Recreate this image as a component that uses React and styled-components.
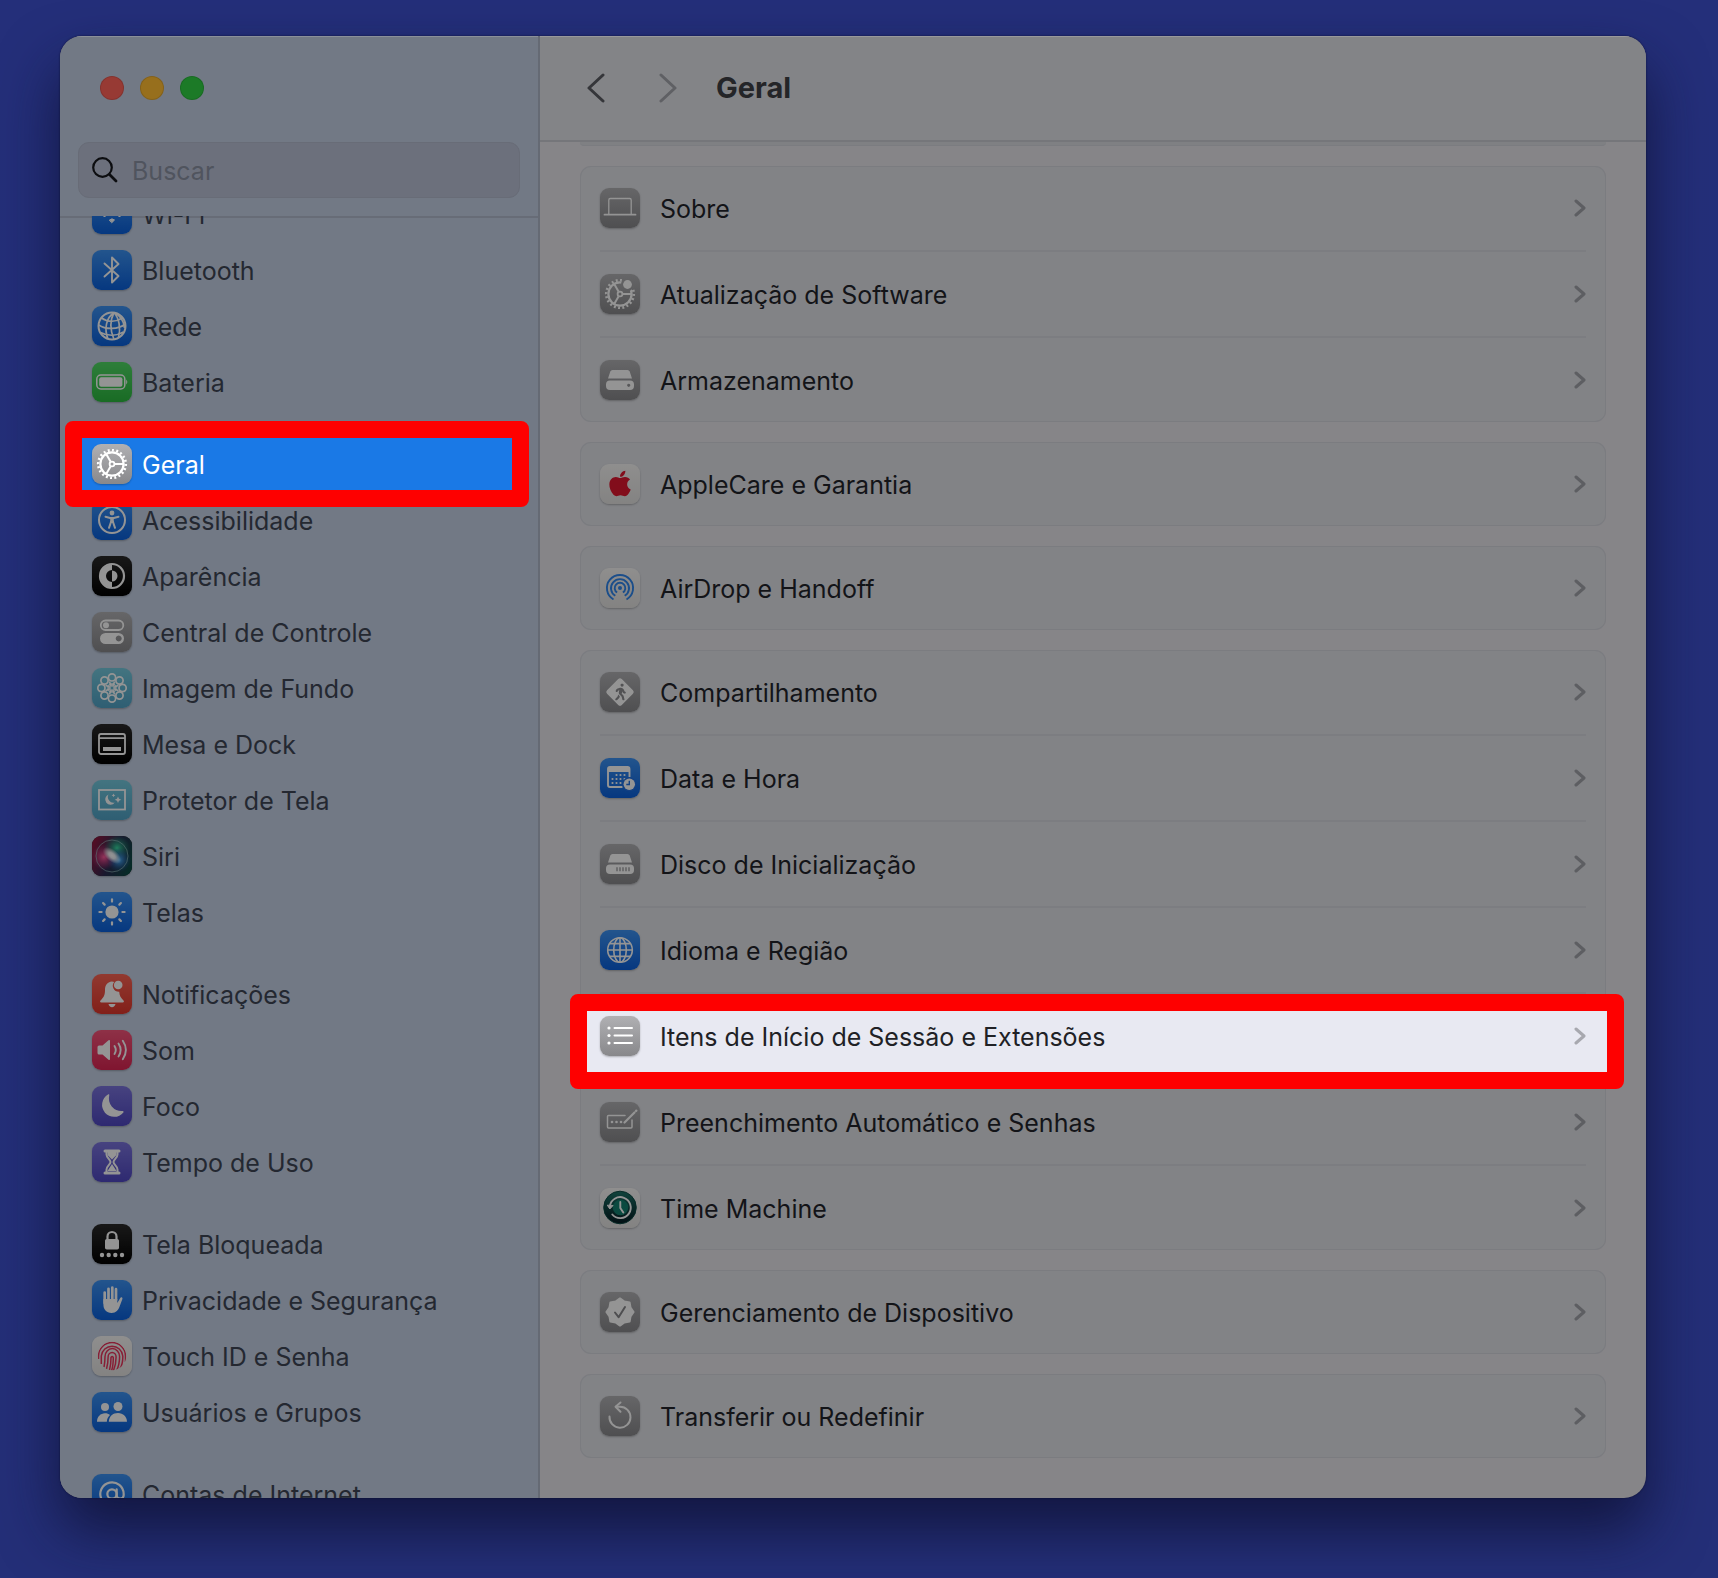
import React from "react";
import styled, { createGlobalStyle, css } from "styled-components";
import { FaApple, FaWalking } from "react-icons/fa";
import { AtSign } from "lucide-react";

const GlobalStyle = createGlobalStyle`
  *, *::before, *::after { box-sizing: border-box; }
  body { margin: 0; background: #242f79; font-family: Inter, "Liberation Sans", sans-serif; }
  button, input { font: inherit; color: inherit; }
`;

const Desktop = styled.div`
  display: flex;
  height: 100vh;
  padding: 36px 72px 80px 60px;
  overflow: hidden;
  background: linear-gradient(#242f7a, #242f78);
`;

const Window = styled.div`
  display: flex;
  flex: 1;
  min-width: 0;
  border-radius: 22px;
  overflow: hidden;
  background: #868588;
  box-shadow: 0 0 2px rgba(8, 10, 40, 0.8), 0 32px 60px rgba(14, 16, 50, 0.8);
`;

const Sidebar = styled.aside`
  display: flex;
  flex-direction: column;
  flex: 0 0 480px;
  min-width: 0;
  background: #727985;
  border-right: 2px solid #656a74;
  box-shadow: inset 0 1px 0 #8b9099;
`;

const SidebarTop = styled.div`
  display: flex;
  flex-direction: column;
  gap: 42px;
  padding: 40px 18px 18px;
`;

const Lights = styled.div`
  display: flex;
  gap: 16px;
  padding-left: 22px;
`;

const Light = styled.button`
  width: 24px;
  height: 24px;
  padding: 0;
  border: 1px solid rgba(0, 0, 0, 0.12);
  border-radius: 50%;
  background: ${(p) => p.$color};
`;

const SearchBox = styled.label`
  display: flex;
  align-items: center;
  gap: 14px;
  height: 56px;
  padding: 0 13px;
  border: 1px solid #686c77;
  border-radius: 11px;
  background: #6c707c;
  color: #0c0d10;
`;

const SearchInput = styled.input`
  flex: 1;
  min-width: 0;
  padding: 2px 0 0;
  border: 0;
  outline: 0;
  background: transparent;
  font-size: 25px;
  &::placeholder { color: #50545e; opacity: 1; }
`;

const SidebarScroll = styled.nav`
  flex: 1;
  min-height: 0;
  overflow: hidden;
  box-shadow: inset 0 2px 0 #676c77;
`;

const SidebarList = styled.div`
  display: flex;
  flex-direction: column;
  gap: 26px;
  margin: -30px 22px 0;
`;

const SidebarGroup = styled.div`
  display: flex;
  flex-direction: column;
`;

const Spotlight = styled.span`
  position: absolute;
  border: 17px solid #fe0000;
  border-radius: 8px;
  pointer-events: none;
`;

const SidebarSpotlight = styled(Spotlight)`
  inset: -15px -13px -15px -17px;
`;

const PanelSpotlight = styled(Spotlight)`
  inset: 0 -18px -11px -10px;
  background: #e8e9f2;
`;

const SidebarItem = styled.button`
  position: relative;
  display: flex;
  align-items: center;
  gap: 10px;
  height: 56px;
  padding: 0 10px;
  border: 0;
  background: transparent;
  color: #242831;
  font-size: 25px;
  line-height: 32px;
  text-align: left;
  white-space: nowrap;
  ${(p) => p.$active && css`
    z-index: 1;
    background: #1a79e6;
    color: #fff;
  `}
`;

const SidebarLabel = styled.span`
  padding-top: 2px;
`;

const tones = {
  blue: ["#3c92f3", "#0a60dc"],
  green: ["#4fd964", "#2bb93f"],
  grey: ["#b0b0b3", "#88888b"],
  black: ["#2a2a2a", "#000000"],
  sky: ["#74c9dd", "#50a2c6"],
  red: ["#fb6353", "#e0362b"],
  pink: ["#f5547a", "#dc2452"],
  purple: ["#7a73dc", "#4f47c2"],
  white: ["#f6f5f4", "#e2e1e0"],
};

const Tile = styled.span`
  position: relative;
  display: flex;
  flex: none;
  width: 40px;
  height: 40px;
  border-radius: 9px;
  overflow: hidden;
  color: #fff;
  background: linear-gradient(${(p) => tones[p.$tone][0]}, ${(p) => tones[p.$tone][1]});
  box-shadow: 0 1px 2px rgba(0, 0, 0, 0.25);
  filter: ${(p) => (p.$lit ? "none" : "brightness(0.58)")};
`;

const Main = styled.main`
  display: flex;
  flex-direction: column;
  flex: 1;
  min-width: 0;
`;

const Toolbar = styled.header`
  display: flex;
  align-items: center;
  gap: 32px;
  height: 106px;
  padding: 0 40px;
  background: #838487;
  border-bottom: 2px solid #75767a;
  box-shadow: inset 0 1px 0 #99999b;
`;

const NavButtons = styled.div`
  display: flex;
  gap: 40px;
`;

const NavButton = styled.button`
  display: flex;
  align-items: center;
  justify-content: center;
  width: 32px;
  height: 40px;
  padding: 0;
  border: 0;
  background: transparent;
  color: ${(p) => (p.disabled ? "#5f6064" : "#35363a")};
`;

const Title = styled.h1`
  margin: 0;
  color: #242528;
  font-size: 29px;
  line-height: 36px;
  font-weight: 700;
`;

const PanelScroll = styled.div`
  display: flex;
  flex-direction: column;
  gap: 20px;
  flex: 1;
  min-height: 0;
  padding: 0 40px 40px;
`;

const Card = styled.section`
  display: flex;
  flex-direction: column;
  border-radius: 11px;
  background: #828386;
  box-shadow: inset 0 0 0 1px #7b7c80;
`;

const CardTail = styled.div`
  flex: none;
  height: 4px;
  border-bottom: 1px solid #7b7c80;
  border-radius: 0 0 11px 11px;
  background: #7f8083;
`;

const Divider = styled.hr`
  align-self: stretch;
  height: 2px;
  margin: 0 20px;
  border: 0;
  background: #7c7d81;
`;

const PanelItem = styled.button`
  position: relative;
  display: flex;
  align-items: center;
  gap: 20px;
  height: 84px;
  padding: 0 20px;
  border: 0;
  background: transparent;
  color: ${(p) => (p.$lit ? "#202125" : "#131418")};
  font-size: 25px;
  line-height: 32px;
  text-align: left;
  z-index: ${(p) => (p.$lit ? 1 : 0)};
`;

const PanelLabel = styled.span`
  position: relative;
  flex: 1;
  min-width: 0;
  padding-top: 2px;
  white-space: nowrap;
`;

const ChevronSlot = styled.span`
  position: relative;
  display: flex;
  color: ${(p) => (p.$lit ? "#a7a8af" : "#5d5e62")};
`;

const polar = (r, deg) => {
  const a = (deg * Math.PI) / 180;
  return [20 + r * Math.cos(a), 20 + r * Math.sin(a)];
};

const line = (r1, r2, deg) => {
  const [x1, y1] = polar(r1, deg);
  const [x2, y2] = polar(r2, deg);
  return <line key={deg} x1={x1} y1={y1} x2={x2} y2={y2} />;
};

const Gear = () => (
  <g fill="none" stroke="currentColor" strokeWidth="2">
    <circle cx="20" cy="20" r="11.6" strokeWidth="2.2" />
    <circle cx="20" cy="20" r="13.8" strokeWidth="2.6" pathLength="40" strokeDasharray="0.9 1.1" />
    <circle cx="20" cy="20" r="2.4" strokeWidth="1.8" />
    {[0, 120, 240].map((d) => line(3, 11, d))}
  </g>
);

const sealPoints = Array.from({ length: 16 }, (_, i) => polar(i % 2 ? 11.4 : 13.6, i * 22.5).join(",")).join(" ");

const glyphs = {
  wifi: (
    <g fill="none" stroke="currentColor" strokeWidth="3" strokeLinecap="round">
      <path d="M8 17a17 17 0 0 1 24 0M12.500 21.500a10.500 10.500 0 0 1 15 0" />
      <path d="M17.500 26a3.600 3.600 0 0 1 5 0L20 28.500z" fill="currentColor" strokeWidth="1" />
    </g>
  ),
  bluetooth: <path d="M12.500 13.500 26.500 26 20 32.500V7.500L26.500 14 12.500 26.500" fill="none" stroke="currentColor" strokeWidth="1.900" strokeLinejoin="round" strokeLinecap="round" />,
  network: (
    <g fill="none" stroke="currentColor" strokeWidth="1.700">
      <circle cx="20" cy="20" r="13.500" strokeWidth="2" />
      <path d="M22 6.500C14 12 12 23 16 33M22 6.500C18 14 18 24 22 33.500M22 6.500C27 12 29 22 26.500 31.500M22 6.500C29 10 32 15 32.500 22" />
      <path d="M9.500 12C16 16.500 24 16 30.500 12M6.800 19C14 24 26 23.500 33.500 18M8.500 26.500C16 30.500 25 30 31.500 26" />
    </g>
  ),
  battery: (
    <g>
      <rect x="4.800" y="13" width="28" height="14" rx="4" fill="none" stroke="currentColor" strokeWidth="1.500" />
      <rect x="7.200" y="15.200" width="23.200" height="9.600" rx="2" fill="currentColor" />
      <path d="M34.200 17.500q2.200 2.500 0 5z" fill="currentColor" />
    </g>
  ),
  gear: <Gear />,
  access: (
    <g stroke="currentColor" fill="none" strokeWidth="2" strokeLinecap="round">
      <circle cx="20" cy="20" r="13" />
      <circle cx="20" cy="13" r="2.400" fill="currentColor" stroke="none" />
      <path d="M13.500 16.800 18 18h4l4.500-1.200M17 27.800 19 22h2l2 5.800" />
      <path d="M18.200 17.500h3.600V23h-3.600z" fill="currentColor" stroke="none" />
    </g>
  ),
  appearance: (
    <g>
      <circle cx="20" cy="20" r="12" fill="none" stroke="currentColor" strokeWidth="2.200" />
      <path d="M20 8.500a11.500 11.500 0 0 0 0 23v-5.500a6 6 0 0 1 0-12z" fill="currentColor" />
      <path d="M20 14.500a5.500 5.500 0 0 1 0 11z" fill="currentColor" />
    </g>
  ),
  control: (
    <g>
      <rect x="8.800" y="8.500" width="22.500" height="9.500" rx="4.750" fill="none" stroke="currentColor" strokeWidth="1.800" />
      <circle cx="14" cy="13.200" r="3" fill="currentColor" />
      <path fillRule="evenodd" d="M13.500 21h13a5.500 5.500 0 0 1 0 11h-13a5.500 5.500 0 0 1 0-11zm13.200 2.500a3 3 0 1 0 0.010 0z" fill="currentColor" />
    </g>
  ),
  flower: (
    <g fill="none" stroke="currentColor" strokeWidth="1.700">
      {Array.from({ length: 8 }, (_, i) => {
        const [x, y] = polar(10.6, i * 45);
        return <circle key={i} cx={x} cy={y} r="3.600" />;
      })}
      {Array.from({ length: 8 }, (_, i) => line(1.5, 7, i * 45 + 22.5))}
      <circle cx="20" cy="20" r="4" strokeWidth="1.300" />
    </g>
  ),
  dock: (
    <g>
      <rect x="7" y="10" width="26" height="20" rx="2" fill="none" stroke="currentColor" strokeWidth="1.800" />
      <path d="M7 14.200h26" stroke="currentColor" strokeWidth="1.800" />
      <rect x="11" y="23" width="18" height="4" fill="currentColor" />
    </g>
  ),
  saver: (
    <g>
      <rect x="7" y="10" width="26" height="19.500" fill="none" stroke="currentColor" strokeWidth="1.800" />
      <path d="M16.500 14.500a5.300 5.300 0 1 0 6.300 8 5.600 5.600 0 0 1-6.300-8z" fill="currentColor" />
      <path d="m26 16.500 1 2.300 2.300 1-2.300 1-1 2.300-1-2.300-2.300-1 2.300-1zM21.500 13.500l.6 1.300 1.300.6-1.300.6-.6 1.300-.6-1.300-1.300-.6 1.300-.6z" fill="currentColor" />
    </g>
  ),
  siri: (
    <g>
      <defs>
        <linearGradient id="siriBase" x1="0" y1="0.300" x2="1" y2="0.700">
          <stop offset="0" stopColor="#8c1840" />
          <stop offset="0.500" stopColor="#2a2a50" />
          <stop offset="1" stopColor="#0b4a44" />
        </linearGradient>
        <radialGradient id="siriPink"><stop offset="0" stopColor="#ff5a9c" /><stop offset="1" stopColor="#c02a78" stopOpacity="0" /></radialGradient>
        <radialGradient id="siriTeal"><stop offset="0" stopColor="#38d8a0" /><stop offset="1" stopColor="#1c9a76" stopOpacity="0" /></radialGradient>
        <radialGradient id="siriBlue"><stop offset="0" stopColor="#4ab4ff" /><stop offset="1" stopColor="#2450b0" stopOpacity="0" /></radialGradient>
        <radialGradient id="siriCore"><stop offset="0" stopColor="#ffffff" /><stop offset="0.350" stopColor="#ffffff" stopOpacity="0.900" /><stop offset="1" stopColor="#ffffff" stopOpacity="0" /></radialGradient>
      </defs>
      <rect width="40" height="40" fill="url(#siriBase)" />
      <circle cx="12" cy="21" r="13" fill="url(#siriPink)" />
      <circle cx="25" cy="12" r="13" fill="url(#siriTeal)" />
      <circle cx="27" cy="24" r="12" fill="url(#siriBlue)" />
      <ellipse cx="20" cy="19.500" rx="11" ry="6" transform="rotate(40 20 19.500)" fill="url(#siriCore)" />
      <circle cx="20" cy="20" r="16" fill="none" stroke="#9fc8c8" strokeOpacity="0.600" strokeWidth="1" />
    </g>
  ),
  sun: (
    <g stroke="currentColor" strokeWidth="2.200" strokeLinecap="round">
      <circle cx="20" cy="20" r="6.600" fill="currentColor" stroke="none" />
      {Array.from({ length: 8 }, (_, i) => line(10.4, 12.6, i * 45))}
    </g>
  ),
  bell: (
    <g fill="currentColor">
      <path d="M20 7.500c-5 .5-7 4-7 8.500 0 5.500-1.500 7.500-4.500 10.500-.8 1-.4 2 .8 2h21.400c1.200 0 1.600-1 .8-2-2.600-2.800-4-4.500-4.300-8.700a6 6 0 0 1-5-9.800z" />
      <path d="M16.500 30h7c-.3 2-1.800 3.200-3.500 3.200S16.800 32 16.500 30z" />
      <circle cx="26.200" cy="11" r="4.300" />
    </g>
  ),
  sound: (
    <g>
      <path d="M5.500 17q0-1.500 1.500-1.500h3.500l6-5.200q1.500-1 1.500.8v17.800q0 1.800-1.500.8l-6-5.200H7q-1.500 0-1.500-1.500z" fill="currentColor" />
      <path d="M22.500 16q2.600 4 0 8M26.500 13.500q4.300 6.500 0 13M30.800 10.800q6.200 9.200 0 18.400" fill="none" stroke="currentColor" strokeWidth="1.900" strokeLinecap="round" />
    </g>
  ),
  moon: <path d="M16 8.500c.8-.4 1.600.2 1.200 1.100A12.500 12.500 0 0 0 30 25c1.200-.3 1.900.4 1.400 1.400A12 12 0 1 1 16 8.500z" fill="currentColor" />,
  hourglass: (
    <g>
      <path d="M13 9h14M13 31h14" stroke="currentColor" strokeWidth="3" strokeLinecap="round" />
      <path d="M14.500 9v3.500c0 3.500 4 5 4 7.500s-4 4-4 7.500V31h11v-3.500c0-3.500-4-5-4-7.500s4-4 4-7.500V9" fill="none" stroke="currentColor" strokeWidth="2" />
      <path d="M15.500 10h9v3L20 17.500 15.500 13zM20 22l4.500 7h-9z" fill="currentColor" />
    </g>
  ),
  lock: (
    <g fill="currentColor">
      <path d="M15.500 16v-3.500a4.500 4.500 0 0 1 9 0V16" fill="none" stroke="currentColor" strokeWidth="2.200" />
      <rect x="13" y="15" width="14" height="10.500" rx="1.800" />
      {[10, 16.7, 23.3, 30].map((x) => <circle key={x} cx={x} cy="31" r="2.200" />)}
    </g>
  ),
  hand: (
    <g fill="currentColor" stroke="currentColor" strokeLinecap="round">
      <path d="M12.700 12.500V23M16.500 8.800V20M20.300 7.500V20M24 9.200V20" strokeWidth="2.700" />
      <path d="M11.400 19h13.900v4l2.800-4.800c.8-1.500 2.800-.9 2.300.8L27.600 26.500c-1.200 3.600-3.500 6.400-8 6.400-5.300 0-8.200-3.600-8.200-8.500z" stroke="none" />
    </g>
  ),
  finger: (
    <g fill="none" stroke="#e8345c" strokeWidth="1.500">
      <clipPath id="fingerClip"><circle cx="20" cy="20" r="14.200" /></clipPath>
      <g clipPath="url(#fingerClip)">
        <path d="M6.500 23v-3a13.500 13.500 0 0 1 27 0v6M9.300 28V20a10.800 10.800 0 0 1 21.500 0q.2 8-3 13M12 31q1-5 1-10.500a7 7.600 0 0 1 14.600 0q0 8-3 14M14.500 33q1.600-6 1.600-12a4 4.500 0 0 1 8 0q0 8-2.800 14M17.500 34q1.500-5 1.500-12.500a1.200 1.500 0 0 1 2.300 0q0 8-1.700 13" />
      </g>
    </g>
  ),
  users: (
    <g fill="currentColor">
      <circle cx="13" cy="15" r="4" />
      <path d="M5 29.700c0-5 3.500-8.500 8-8.500 2 0 3.700.6 5 1.800-2 1.800-3 4-3.200 6.700z" />
      <circle cx="26" cy="14.500" r="4.500" />
      <path d="M16.800 29.700c.3-5.200 4-8.600 9.200-8.600s8.800 3.600 9 8.600z" />
    </g>
  ),
  at: <AtSign x="6" y="6" width="28" height="28" strokeWidth={1.9} />,
  laptop: (
    <g fill="none" stroke="currentColor" strokeWidth="1.300">
      <path d="M8.800 26V12q0-1.500 1.500-1.500h19.400q1.500 0 1.500 1.500v14" />
      <path d="M4.500 26.700h31" strokeWidth="1.800" strokeLinecap="round" />
    </g>
  ),
  update: (
    <g>
      <clipPath id="updateClip"><path clipRule="evenodd" d="M0 0h40v40H0zM27.500 4a6.500 6.500 0 1 0 .010 0z" /></clipPath>
      <g clipPath="url(#updateClip)"><Gear /></g>
      <circle cx="27.500" cy="10.500" r="4.400" fill="currentColor" />
    </g>
  ),
  drive: (
    <g fill="currentColor">
      <path d="M12.500 10h15q1.600 0 2.200 1.500L32 18.500H8l2.300-7Q10.900 10 12.500 10z" />
      <path fillRule="evenodd" d="M10 20.500h20a4 4 0 0 1 4 4V26a4 4 0 0 1-4 4H10a4 4 0 0 1-4-4v-1.500a4 4 0 0 1 4-4zm18.700 3.200a1.600 1.600 0 1 0 .010 0z" />
    </g>
  ),
  disk: (
    <g fill="currentColor">
      <path d="M12.500 10h15q1.600 0 2.200 1.500L32 18.500H8l2.300-7Q10.900 10 12.500 10z" />
      <rect x="6" y="20.500" width="28" height="9.500" rx="4" />
      <path d="M17 23.200v4M20 23.200v4M23 23.200v4M26 23.200v4M29 23.200v4" stroke="#8f8f93" strokeWidth="1.200" />
    </g>
  ),
  apple: <FaApple x="5.500" y="5" size={29} color="#e0162f" />,
  airdrop: (
    <g fill="none" stroke="#2f86ee" strokeWidth="1.900">
      <circle cx="20" cy="20" r="2" fill="#2f86ee" stroke="none" />
      <path d="M17.100 24.500a5.300 5.300 0 1 1 5.800 0M15.300 27.800a9 9 0 1 1 9.400 0M13.500 31.500a13.100 13.100 0 1 1 13 0" />
    </g>
  ),
  sharing: (
    <g>
      <rect x="9.600" y="9.600" width="20.800" height="20.800" rx="2.500" transform="rotate(45 20 20)" fill="currentColor" />
      <FaWalking x="12" y="11.500" size={17} color="#8d8d91" />
    </g>
  ),
  calendar: (
    <g>
      <path d="M22.500 29H10q-2 0-2-2V11q0-2 2-2h17.500q2 0 2 2v8" fill="none" stroke="currentColor" strokeWidth="1.900" />
      <path d="M8 9.500h21.500v4.500H8z" fill="currentColor" />
      {[[16.5, 17], [20.5, 17], [24.5, 17], [12.5, 21], [16.5, 21], [20.5, 21], [24.5, 21], [12.5, 25], [16.5, 25], [20.5, 25]].map(([x, y]) => (
        <circle key={`${x}-${y}`} cx={x} cy={y} r="1.100" fill="currentColor" />
      ))}
      <circle cx="29.300" cy="26.300" r="7" fill="#2270e2" />
      <circle cx="29.300" cy="26.300" r="5.700" fill="currentColor" />
      <path d="M29.300 22.800v3.700h-3" fill="none" stroke="#2270e2" strokeWidth="1.400" />
    </g>
  ),
  globe: (
    <g fill="none" stroke="currentColor" strokeWidth="1.600">
      <circle cx="20" cy="20" r="12.300" />
      <ellipse cx="20" cy="20" rx="6.300" ry="12.300" />
      <path d="M20 7.700v24.600M7.700 20h24.600M9.800 13.600h20.400M9.800 26.400h20.400" />
    </g>
  ),
  list: (
    <g stroke="currentColor" strokeWidth="2" strokeLinecap="round">
      <path d="M14.500 12H32M14.500 19.500H32M14.500 27H32" />
      {[12, 19.5, 27].map((y) => <circle key={y} cx="9" cy={y} r="1.600" fill="currentColor" stroke="none" />)}
    </g>
  ),
  autofill: (
    <g fill="none" stroke="currentColor" strokeWidth="1.500" strokeLinecap="round">
      <path d="M25 13.500H8.500q-1 0-1 1V25q0 1 1 1H31q1 0 1-1v-7" />
      <path d="m24.500 20.500 10-10" strokeWidth="2.200" />
      <path d="m36 9 .3-.3" strokeWidth="2.400" />
      {[12, 16.5, 21].map((x) => <circle key={x} cx={x} cy="20" r="1.300" fill="currentColor" stroke="none" />)}
    </g>
  ),
  timemachine: (
    <g>
      <defs>
        <linearGradient id="tmFace" x1="0" y1="0" x2="0" y2="1"><stop offset="0" stopColor="#1c7468" /><stop offset="1" stopColor="#041a20" /></linearGradient>
      </defs>
      <circle cx="20" cy="19.500" r="16.300" fill="url(#tmFace)" stroke="#0d4a44" strokeWidth="1" />
      <g fill="none" stroke="currentColor" strokeWidth="1.900" strokeLinecap="round">
        <circle cx="20.500" cy="19.500" r="7.800" fill="#13806f" stroke="none" />
        <path d="M9.800 18.500a10.500 10.500 0 1 1 2.500 8M20.300 14v6l3 4.500" />
        <path d="m7.500 17.500 2.300 3.500 3-3.200z" fill="currentColor" strokeWidth="1" />
      </g>
    </g>
  ),
  seal: (
    <g>
      <polygon points={sealPoints} fill="currentColor" stroke="currentColor" strokeWidth="2" strokeLinejoin="round" />
      <path d="m15 20.500 3.600 4.700L25 15" fill="none" stroke="#86868a" strokeWidth="2" strokeLinecap="round" strokeLinejoin="round" />
    </g>
  ),
  reset: (
    <g fill="none" stroke="currentColor" strokeWidth="2" strokeLinecap="round" strokeLinejoin="round">
      <path d="M9.500 20.500A10.500 10.500 0 1 0 20 10.700h-4" />
      <path d="M20.500 6.500 15.500 10.700l5 5" />
    </g>
  ),
};

function AppIcon({ name, tone, lit }) {
  return (
    <Tile $tone={tone} $lit={lit} aria-hidden="true">
      <svg width="40" height="40" viewBox="0 0 40 40">{glyphs[name]}</svg>
    </Tile>
  );
}

function Chevron({ left, width, height, stroke }) {
  const d = left
    ? `M${width - 2} 2 2 ${height / 2}l${width - 4} ${height / 2 - 2}`
    : `M2 2l${width - 4} ${height / 2 - 2}L2 ${height - 2}`;
  return (
    <svg width={width} height={height} viewBox={`0 0 ${width} ${height}`} aria-hidden="true">
      <path d={d} fill="none" stroke="currentColor" strokeWidth={stroke} strokeLinecap="round" strokeLinejoin="round" />
    </svg>
  );
}

const sidebarGroups = [
  [
    ["Wi-Fi", "wifi", "blue"],
    ["Bluetooth", "bluetooth", "blue"],
    ["Rede", "network", "blue"],
    ["Bateria", "battery", "green"],
  ],
  [
    ["Geral", "gear", "grey"],
    ["Acessibilidade", "access", "blue"],
    ["Aparência", "appearance", "black"],
    ["Central de Controle", "control", "grey"],
    ["Imagem de Fundo", "flower", "sky"],
    ["Mesa e Dock", "dock", "black"],
    ["Protetor de Tela", "saver", "sky"],
    ["Siri", "siri", "black"],
    ["Telas", "sun", "blue"],
  ],
  [
    ["Notificações", "bell", "red"],
    ["Som", "sound", "pink"],
    ["Foco", "moon", "purple"],
    ["Tempo de Uso", "hourglass", "purple"],
  ],
  [
    ["Tela Bloqueada", "lock", "black"],
    ["Privacidade e Segurança", "hand", "blue"],
    ["Touch ID e Senha", "finger", "white"],
    ["Usuários e Grupos", "users", "blue"],
  ],
  [["Contas de Internet", "at", "blue"]],
];

const panelGroups = [
  [
    ["Sobre", "laptop", "grey"],
    ["Atualização de Software", "update", "grey"],
    ["Armazenamento", "drive", "grey"],
  ],
  [["AppleCare e Garantia", "apple", "white"]],
  [["AirDrop e Handoff", "airdrop", "white"]],
  [
    ["Compartilhamento", "sharing", "grey"],
    ["Data e Hora", "calendar", "blue"],
    ["Disco de Inicialização", "disk", "grey"],
    ["Idioma e Região", "globe", "blue"],
    ["Itens de Início de Sessão e Extensões", "list", "grey"],
    ["Preenchimento Automático e Senhas", "autofill", "grey"],
    ["Time Machine", "timemachine", "white"],
  ],
  [["Gerenciamento de Dispositivo", "seal", "grey"]],
  [["Transferir ou Redefinir", "reset", "grey"]],
];

const SELECTED = "Geral";
const HIGHLIGHTED = "Itens de Início de Sessão e Extensões";

export default function App() {
  return (
    <>
      <GlobalStyle />
      <Desktop>
        <Window>
          <Sidebar>
            <SidebarTop>
              <Lights>
                <Light $color="#973a34" aria-label="Fechar" />
                <Light $color="#976f1d" aria-label="Minimizar" />
                <Light $color="#1c7a27" aria-label="Ampliar" />
              </Lights>
              <SearchBox>
                <svg width="26" height="26" viewBox="0 0 26 26" fill="none" stroke="currentColor" strokeLinecap="round" aria-hidden="true">
                  <circle cx="10.500" cy="10.500" r="9.300" strokeWidth="2.200" />
                  <path d="m17.500 17.500 6.500 6.500" strokeWidth="2.800" />
                </svg>
                <SearchInput type="search" placeholder="Buscar" aria-label="Buscar" />
              </SearchBox>
            </SidebarTop>
            <SidebarScroll>
              <SidebarList>
                {sidebarGroups.map((group) => (
                  <SidebarGroup key={group[0][0]}>
                    {group.map(([label, icon, tone]) => (
                      <SidebarItem key={label} $active={label === SELECTED}>
                        {label === SELECTED && <SidebarSpotlight />}
                        <AppIcon name={icon} tone={tone} lit={label === SELECTED} />
                        <SidebarLabel>{label}</SidebarLabel>
                      </SidebarItem>
                    ))}
                  </SidebarGroup>
                ))}
              </SidebarList>
            </SidebarScroll>
          </Sidebar>
          <Main>
            <Toolbar>
              <NavButtons>
                <NavButton aria-label="Voltar"><Chevron left width={18} height={30} stroke={3} /></NavButton>
                <NavButton aria-label="Avançar" disabled><Chevron width={18} height={30} stroke={3} /></NavButton>
              </NavButtons>
              <Title>Geral</Title>
            </Toolbar>
            <PanelScroll>
              <CardTail />
              {panelGroups.map((group) => (
                <Card key={group[0][0]}>
                  {group.map(([label, icon, tone], i) => {
                    const lit = label === HIGHLIGHTED;
                    return (
                      <React.Fragment key={label}>
                        {i > 0 && <Divider />}
                        <PanelItem $lit={lit}>
                          {lit && <PanelSpotlight />}
                          <AppIcon name={icon} tone={tone} lit={lit} />
                          <PanelLabel>{label}</PanelLabel>
                          <ChevronSlot $lit={lit}><Chevron width={12} height={18} stroke={3} /></ChevronSlot>
                        </PanelItem>
                      </React.Fragment>
                    );
                  })}
                </Card>
              ))}
            </PanelScroll>
          </Main>
        </Window>
      </Desktop>
    </>
  );
}
